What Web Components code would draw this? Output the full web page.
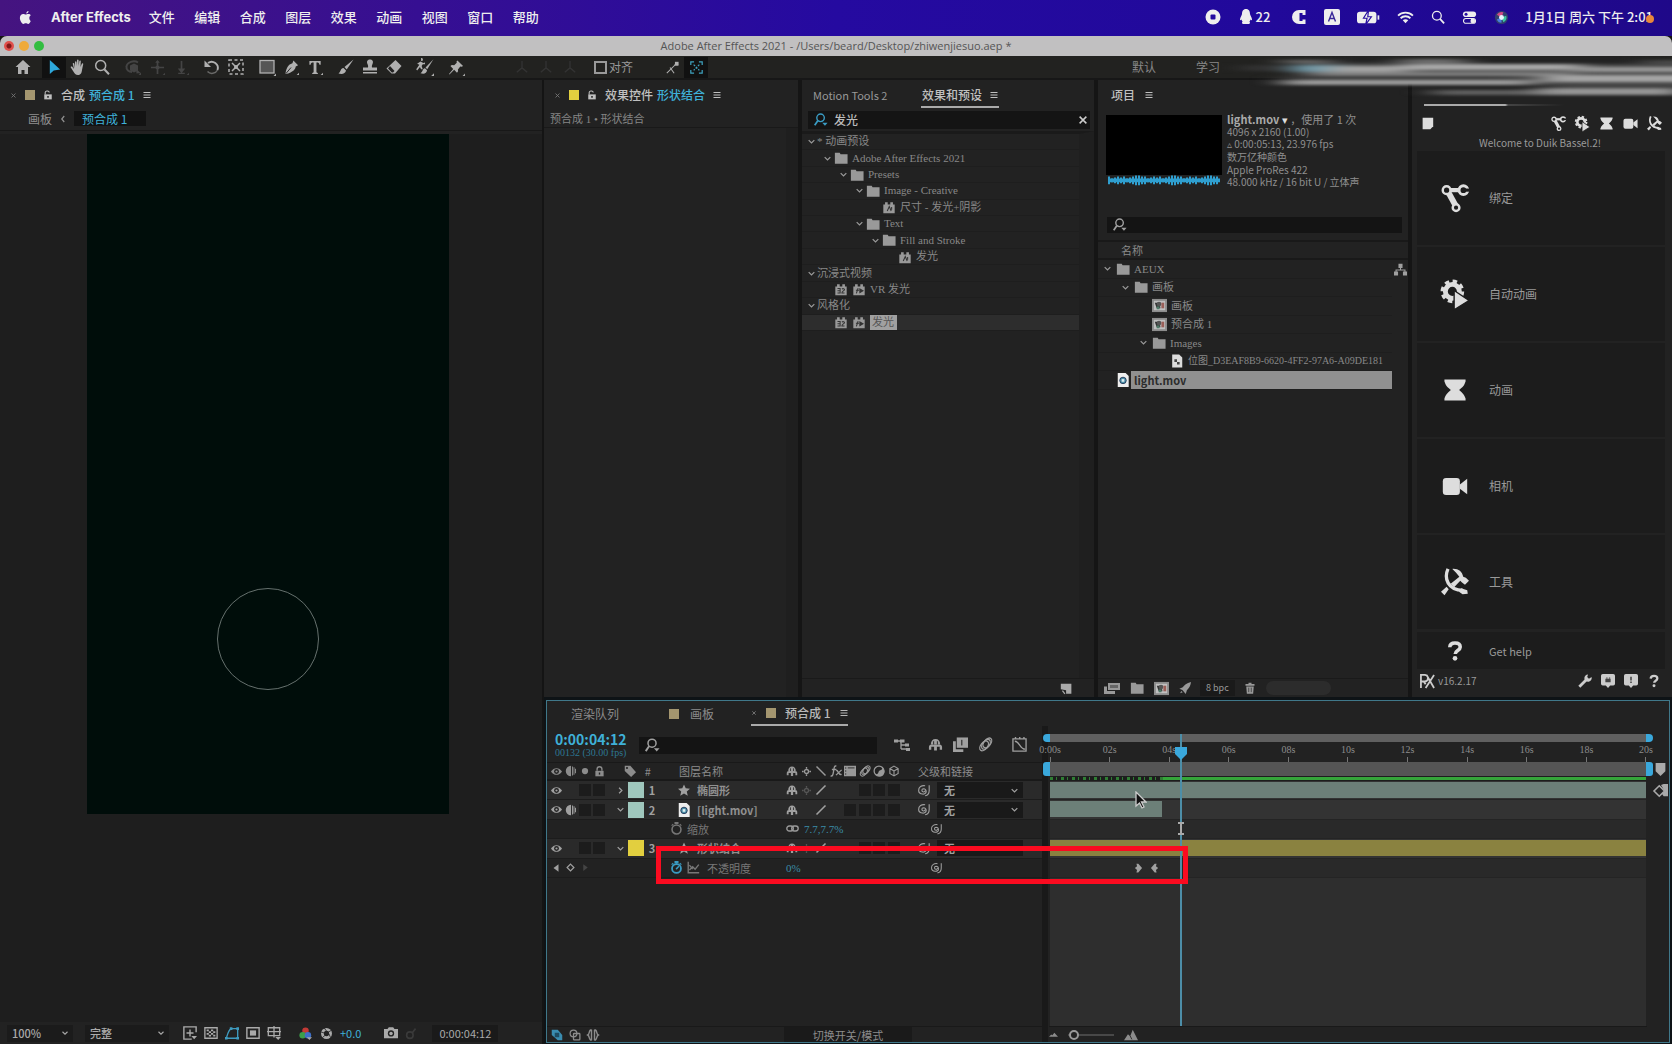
<!DOCTYPE html>
<html lang="zh-CN">
<head>
<meta charset="utf-8">
<title>After Effects</title>
<style>
html,body{margin:0;height:100%;background:#141414}
body{font:12px/16px "Noto Sans CJK SC",sans-serif;color:#a0a0a0;overflow:hidden;
--panel:#222;--line:#161616;--cyan:#3fb1d8;--serif:"Liberation Serif","Noto Sans CJK SC",serif}
</style>
</head>
<body>
<ae-app></ae-app>
<script>
const ICONS={
apple:'<path d="M11.2 1c.1 1.300-.9 2.700-2.400 2.800C8.600 2.500 9.800 1.200 11.200 1zM13.600 11.600c-.6 1.500-1.600 3.200-2.800 3.200-1 0-1.300-.6-2.500-.6s-1.600.6-2.500.6C4.300 14.800 2 11.500 2 8.500c0-2.800 1.800-4.300 3.500-4.300 1.100 0 2 .7 2.700.7s1.700-.8 3.100-.7c.9 0 1.800.5 2.400 1.300-2.300 1.400-1.900 4.700-.1 6.100z"/>',
rec:'<circle cx="8" cy="8" r="7.500"/><rect x="5.500" y="5.500" width="5" height="5" rx="1" fill="#240aa0"/>',
qq:'<path d="M8 0c3 0 4 2.500 4 5 0 1 2 3.500 2 5.500 0 1-.8.8-1.400 0-.3 1-.8 1.700-1.200 2.300.9.500.9 2-.4 2.200H5c-1.300-.2-1.300-1.700-.4-2.200-.4-.6-.9-1.300-1.200-2.300-.6.800-1.400 1-1.400 0 0-2 2-4.500 2-5.500 0-2.500 1-5 4-5z"/>',
cc:'<path d="M14.500 1H8a7 7 0 0 0 0 14h6.500v-4.500h-3V12H8.500V4h3v2h3z"/><path d="M9.500 4h1.500v8H9.500z" fill="#240aa0"/>',
aa:'<rect x="0" y="0" width="16" height="16" rx="2"/><path d="M4.500 12.500 8 3.500l3.500 9M5.800 9.500h4.400" fill="none" stroke="#3a2a9a" stroke-width="1.400"/>',
batt:'<rect x="0" y="4" width="13.500" height="8" rx="2"/><path d="M14.300 6.500h1.200v3h-1.200z"/><path d="M8 3 4.500 8.500H7L6 13l4-5.500H7.500z" stroke="#240aa0" stroke-width=".8"/>',
wifi:'<path d="M1 6.200a10 10 0 0 1 14 0M3.400 8.700a6.600 6.600 0 0 1 9.200 0" fill="none" stroke="currentColor" stroke-width="1.700"/><path d="M5.400 10.700a3.600 3.600 0 0 1 5.200 0L8 13.500z"/>',
mag:'<circle cx="6.700" cy="6.500" r="5" fill="none" stroke="currentColor" stroke-width="1.500"/><path d="m10.300 10.200 4.700 5" stroke="currentColor" stroke-width="2"/>',
ctl:'<rect x="1" y="1.500" width="14" height="6" rx="3"/><circle cx="4.300" cy="4.500" r="1.600" fill="#240aa0"/><rect x="1.600" y="9.100" width="12.800" height="5" rx="2.500" fill="none" stroke="currentColor" stroke-width="1.200"/><circle cx="11.500" cy="11.600" r="2.500"/>',
siri:'<circle cx="8" cy="8" r="7" fill="#31406e"/><path d="M3 5a6 6 0 0 1 7-2.500L8 8z" fill="#d24a86"/><path d="M13 6a6 6 0 0 1-3 7L8 8z" fill="#3cc7a2"/><path d="M3 10a6 6 0 0 0 5 3.600L8 8z" fill="#4a7ce0"/><circle cx="8" cy="8" r="2.600" fill="#e8f4ff"/>',
home:'<path d="M8 1 .5 8H3v7h3.500v-4h3v4H13V8h2.500z"/>',
sel:'<path d="M3 0v15l4.200-3.700L14 10z"/>',
hand:'<path d="M5 9V3.200c0-1.200 1.500-1.200 1.600 0L7 7V1.300c0-1.200 1.600-1.200 1.600 0V7l.7-4.800c.2-1.100 1.600-.9 1.500.3L10.500 8l1.300-3.300c.4-1 1.700-.6 1.400.5L12 11c-.3 2.500-1 5-4 5-2.500 0-3.500-1.500-4.300-3L.8 8.500C.3 7.500 1.500 7 2.300 7.800L4 10 2.800 5c-.2-1.100 1.100-1.300 1.500-.4z"/>',
orbit:'<path d="M13 3.500C9 1 2 3 1.500 7.500 1 11 4 13 7 13" fill="none" stroke="currentColor" stroke-width="2"/><path d="M5 6.500 9 4.500l4 2v5l-4 2-4-2z"/><path d="m11 9.500 4.500 4.500-4 .5zM16 16h-2.500L16 13.500z"/>',
pan:'<path d="M8 1v14M1 8h14" stroke="currentColor" stroke-width="1.800"/><path d="m8 0 2.500 3h-5z"/><circle cx="8" cy="8" r="2.200"/><path d="M16 16h-2.500L16 13.500z"/>',
dolly:'<path d="M8 1v10" stroke="currentColor" stroke-width="1.800"/><path d="m8 14-4-5h8zM4.500 13.500h7V15h-7zM16 16h-2.500L16 13.500z"/>',
rot:'<path d="M4 4a6.200 6.200 0 0 1 9.500 7" fill="none" stroke="currentColor" stroke-width="1.900"/><path d="M13.500 11A6.200 6.200 0 0 1 3.500 12.500" fill="none" stroke="currentColor" stroke-width="1.500" opacity=".5"/><path d="M.5 1.500v6.500H7z"/>',
anchor:'<path d="M1 1h14v14H1z" fill="none" stroke="currentColor" stroke-width="1.500" stroke-dasharray="3 2.500"/><path d="m4 4 8 8m0-8-8 8" stroke="currentColor" stroke-width="1.500"/><circle cx="8" cy="8" r="2"/>',
rect:'<rect x="1" y="1.500" width="14" height="12.500" fill="#555" stroke="currentColor" stroke-width="1.300"/><path d="M17 17h-2.500L17 14.500z"/>',
pen:'<path d="M10 .5 15 5.500 12.500 7c-.5 3-2 5-8 7.500L1.500 15 2 12C3.500 6.500 5.500 4.500 9 3.500z"/><path d="M2 14.500 7.500 8" stroke="#222" stroke-width="1"/><path d="M16 16h-2.500L16 13.500z"/>',
type:'<path d="M1.500 1h12v4h-1.300C12 3.200 11.500 2.600 9 2.600v10c0 .8.500 1 1.500 1.200V15h-6v-1.200c1-.2 1.500-.4 1.500-1.200v-10c-2.500 0-3 .6-3.200 2.400H1.500z"/><path d="M16 16h-2.500L16 13.500z"/>',
brush:'<path d="M15.500.500 6.500 8l2.200 2.500z"/><path d="M5.500 9c-3-.2-2.500 4-5 5.500 3.500 1 7 .3 7.500-3z"/>',
stamp:'<path d="M8 .5c3 0 3.500 2.500 2.500 4.500-.6 1.300-.8 2.500-.5 3.500h5v3H1v-3h5c.3-1 .1-2.200-.5-3.500-1-2-.5-4.500 2.500-4.500zM1 13h14v1.500H1z"/>',
eraser:'<path d="M9.500 1 15.500 7 9 14.500H5.500L.5 9.500z"/><path d="m4 7 4.500 5-1.500 1.500H5.800L2 9.500z" fill="#222"/>',
roto:'<path d="M15.500 1 8.500 8.500 10 10z"/><path d="M8 9c-2.500.3-1.500 3-4 4.500 3 1 5.500.3 5.800-2.600zM4.500 2.500A1.300 1.300 0 1 0 4.500 0zM1 5l3-2 2.500 1.500L8 4v1.500H6L5 7l1 3H4.500L3.500 8 1 11l-.8-1L3 6z"/><path d="M16 16h-2.500L16 13.500z"/>',
pin:'<path d="m9 .5 6 6-1.500.8L12 7 9.500 10l.2 2L8.500 13.500 5.500 10.500.5 15.500 0 15l4.500-5.500-3-3L3 5.300l2.500.2L8.300 3 8 1.500zM17 17h-2.500L17 14.500z"/>',
axes:'<path d="M8 1v8M8 9l-6 5M8 9l6 5" fill="none" stroke="currentColor" stroke-width="1.500"/>',
snap1:'<path d="M1 15 12 4M5 8l5 7M10 5l5 0" fill="none" stroke="currentColor" stroke-width="1.300"/><path d="M11 1h4.500v4.500H11z"/>',
snap2:'<path d="M1 5V1h4M11 1h4v4M15 11v4h-4M5 15H1v-4" fill="none" stroke="currentColor" stroke-width="1.500"/><path d="m4.500 4.500 7 7m0-7-7 7" stroke="currentColor" stroke-width="1.500" stroke-dasharray="2.500 1.500"/>',
x:'<path d="m3.500 3.500 9 9m0-9-9 9" stroke="currentColor" stroke-width="2"/>',
lock:'<path d="M2 7h12v8H2z"/><path d="M3.500 7V4.500A2.800 2.800 0 0 1 6.300 1.500h.9A2.800 2.800 0 0 1 10 4" fill="none" stroke="currentColor" stroke-width="1.700"/><path d="M6.800 9.500h2.400v3H6.800z" fill="#222"/>',
lockc:'<path d="M2 7h12v8H2z"/><path d="M4.500 7V4.500a3.500 3.500 0 0 1 7 0V7" fill="none" stroke="currentColor" stroke-width="2"/><path d="M7 9.500h2v3H7z" fill="#222"/>',
menu:'<path d="M1 3h14M1 8h14M1 13h14" stroke="currentColor" stroke-width="2"/>',
down:'<path d="m3 5.500 5 5 5-5" fill="none" stroke="currentColor" stroke-width="2.200"/>',
right:'<path d="m5.500 3 5 5-5 5" fill="none" stroke="currentColor" stroke-width="2.200"/>',
left:'<path d="m10.500 2-5 6 5 6" fill="none" stroke="currentColor" stroke-width="2.400"/>',
search:'<circle cx="7.500" cy="5.500" r="4.300" fill="none" stroke="currentColor" stroke-width="1.600"/><path d="M4.300 8.800.8 14" stroke="currentColor" stroke-width="2"/><path d="M9.500 11h6l-3 3.500z"/>',
folder:'<path d="M1 2h5.500l1 1.700H15.500V14.500H1z"/>',
preset:'<path d="M1.500 5h2V2.500h3V5h3V2.500h3V5h2v10h-13z"/><path d="m6 12.500 2.300-5 2.200 5M11 8v3" stroke="#333" stroke-width="1.200" fill="none"/>',
fx32:'<path d="M1.500 5h2V2.500h3V5h3V2.500h3V5h2v10h-13z"/><path d="M4 7.500h3v5H4m0-2.500h3M12 12.500H9c0-2 3-2.500 3-4 0-1-2-1.200-3-.5" stroke="#333" stroke-width="1.200" fill="none"/>',
fxp:'<path d="M1.500 5h2V2.500h3V5h3V2.500h3V5h2v10h-13z"/><path d="m5 13 2-6M4.500 9.500H8M9 8l3.500 2L9 12z" stroke="#333" stroke-width="1.200" fill="#333"/>',
comp:'<path d="M0 1h16v14H0z" fill="#8d8d8d"/><path d="M2 3h12v10H2z" fill="#c0c0c0"/><path d="M3 5h5l1 6H5z" fill="#333"/><circle cx="7.500" cy="6.500" r="2.500" fill="#555"/><path d="M10 5h3v6h-3z" fill="#9b5f58"/><path d="M5 9h3v3H5z" fill="#4f7a68"/>',
file:'<path d="M2.500.500h8l3.500 3.500v11.500H2.500z" fill="#dcdcdc"/><path d="M5 6h3v3h3v3H8V9H5z" fill="#444"/>',
mov:'<path d="M2 0h9l3.500 3.500V16H2z" fill="#eee"/><circle cx="8" cy="8.500" r="3.700" fill="#4a90a8" stroke="#235" stroke-width="1"/><path d="M6.500 7h3v3h-3z" fill="#dfeef2"/>',
tree:'<path d="M5.500 1h5v5h-5zM0 10.500h5v5H0zM11 10.500h5v5h-5z"/><path d="M8 6v3M2.500 11V8.700h11V11" fill="none" stroke="currentColor" stroke-width="1.300"/>',
note:'<path d="M2 1h13v10.500L11.500 15H2z"/>',
newc:'<path d="M1 2h13v12.500H7.500V10L1 9z"/><path d="m3 10.500 3 4" stroke="currentColor" stroke-width="1.500"/>',
interp:'<path d="M4 3h12v7H4z"/><path d="M0 6.500h3V11h8v3H0z"/><path d="M6 5h8v3H6z" fill="#666"/>',
rocket:'<path d="M16 0C10 1.500 7 4 5 7L.5 9l4 1.500 2.500 3L9 16l1.500-5C13.500 8 15.500 5 16 0zM3 12l-1.500 3L5 13.500z"/>',
trash:'<path d="M2 2.500h4V1h4v1.500h4V5H2zM3 6h10l-.8 9.500H3.800z"/><path d="M6.300 7.500v6M9.700 7.500v6" stroke="#333"/>',
bones:'<path d="M3.500 3.500 9 13.500" stroke="currentColor" stroke-width="3.400"/><path d="M4.500 3.500h7" stroke="currentColor" stroke-width="2.400"/><circle cx="3.200" cy="3.500" r="2.200" fill="#1c1c1c" stroke="currentColor" stroke-width="1.400"/><circle cx="8.600" cy="13.500" r="1.900" fill="#1c1c1c" stroke="currentColor" stroke-width="1.400"/><circle cx="12.800" cy="3.500" r="2.500" fill="#1c1c1c" stroke="currentColor" stroke-width="1.700"/><path d="M13 2.600h3.500v1.800H13z" fill="#1c1c1c"/>',
gearp:'<circle cx="6.500" cy="6.500" r="4" fill="none" stroke="currentColor" stroke-width="2.800"/><circle cx="6.500" cy="6.500" r="5.800" fill="none" stroke="currentColor" stroke-width="1.900" stroke-dasharray="2.550 2"/><path d="M7.500 6v11l8.500-5.300z" stroke="#1c1c1c" stroke-width=".8"/>',
hour:'<path d="M1.500 1.500h13v1.200c-1 3.300-3 4.300-4 5.300 1 1 3 2 4 5.300v1.200h-13v-1.200c1-3.300 3-4.300 4-5.300-1-1-3-2-4-5.300z"/>',
cam:'<rect x=".5" y="3" width="10.500" height="10.500" rx="2"/><path d="m11 7 4.500-3.500v9.500L11 9.700z"/>',
tools:'<path d="M4 .5C1.500 6 4 12.500 12.500 12.800" fill="none" stroke="currentColor" stroke-width="1.900"/><path d="m11.500 11.500 3.500 1.200.3 2-3 .3-2-1.500zM0 13.500 3.200 10.700 4.400 12.200 2 15.500zM5.500 9 10.500 5 8.500 2.500 6.500.5C10 .3 12 2 12.700 5l1.500.5 1.800 1.800-2.300 2.200L12 8.300l-1-1L7.500 11z"/>',
q:'<path d="M4.200 5.300C4.300 2.800 6 2.200 8 2.200c2.400 0 3.800 1.100 3.800 2.900 0 2.600-3.600 2.500-3.600 5" fill="none" stroke="currentColor" stroke-width="2.600"/><circle cx="8" cy="13.300" r="1.700"/>',
wrench:'<path d="m1.500 14.500 8-8" stroke="currentColor" stroke-width="3.200"/><path d="M15.500 3.500a4.200 4.200 0 1 1-4-3L10.500 3.500 12.500 5.500z"/>',
chat:'<path d="M2 0h12a2 2 0 0 1 2 2v9a2 2 0 0 1-2 2h-3.500L8 16l-2.500-3H2a2 2 0 0 1-2-2V2a2 2 0 0 1 2-2z"/><path d="M5 5.500h6v4H5zM6 4h1.500v1H6zm3 0h1.500v1H9z" fill="#444"/>',
alert:'<path d="M2 0h12a2 2 0 0 1 2 2v9a2 2 0 0 1-2 2h-3.500L8 16l-2.500-3H2a2 2 0 0 1-2-2V2a2 2 0 0 1 2-2z"/><path d="M7.100 3h1.800v4.300H7.100zM7.100 8.500h1.800v1.800H7.100z" fill="#444"/>',
px:'<path d="M1 15V1h4a3 3 0 0 1 0 7H1M7 1l8 14M15 1 6 15M4 8l2 3" fill="none" stroke="currentColor" stroke-width="1.900"/>',
mini:'<path d="M0 4h9M7 4v8M7 8h6M7 12h8" fill="none" stroke="currentColor" stroke-width="1.300"/><path d="M0 2.500h4v3H0zM6 2.500h4.500v3H6zM11 6.500h4v3h-4zM12 11h4v3h-4z"/>',
shy:'<path d="M3 8C3 4 5 2 8 2s5 2 5 6z"/><path d="M1 13.500V11c0-2 1-3 3-3h8c2 0 3 1 3 3v2.500h-2.500V10.500H9.500v4h-3v-4h-3v3z"/><path d="M6 4.500v3.500M10 4.500v3.500" stroke="#222" stroke-width="1"/>',
blend:'<path d="M4 .5h12v11H4z"/><path d="M0 4.500h3V13h8v3H0z"/><path d="M8.500 3h1.600v6H8.500z" fill="#444"/>',
mblur:'<g fill="none" stroke="currentColor" stroke-width="1.400"><ellipse cx="6.500" cy="9.500" rx="3.500" ry="6" transform="rotate(38 6.500 9.500)"/><ellipse cx="8.500" cy="7.800" rx="3.500" ry="6" transform="rotate(38 8.500 7.800)"/><ellipse cx="10" cy="6.300" rx="3.500" ry="6" transform="rotate(38 10 6.300)"/></g>',
graph:'<path d="M1 2h14v13H1zM3 4.500c5 0 5.500 8.500 11 8.500" fill="none" stroke="currentColor" stroke-width="1.400"/><path d="M3 0h1.500v2H3zM7.500 0H9v2H7.500zM12 0h1.500v2H12z"/>',
eye:'<path d="M0 8c4-6.500 12-6.500 16 0-4 6.500-12 6.500-16 0z"/><circle cx="8" cy="8" r="3.600" fill="#222"/><circle cx="8" cy="8" r="1.600"/>',
spk:'<path d="M8 1v14A7 7 0 0 1 8 1z"/><path d="M10 2v12M12 3v10M14 5v6" stroke="currentColor" stroke-width="1.300"/>',
dot:'<circle cx="8" cy="8" r="5"/>',
tag:'<path d="M1 1h7.500L16 9.500 9.500 16 1 8z"/><circle cx="4" cy="4" r="1.400" fill="#222"/>',
sun:'<circle cx="8" cy="8" r="3.600" fill="none" stroke="currentColor" stroke-width="2.400"/><path d="M8 0v3M8 13v3M0 8h3M13 8h3" stroke="currentColor" stroke-width="2.400"/>',
back:'<path d="m2 2 12 12" stroke="currentColor" stroke-width="1.900"/>',
slash:'<path d="M2 14 14 2" stroke="currentColor" stroke-width="2.200"/>',
fx:'<path d="M8.500 1.500C5.500.500 5.500 4 4.800 8S4 15.500.8 14.500M2.500 6h6M8 7c3-1 3 7 7.500 5.500M15.500 6.500 8 13.500" fill="none" stroke="currentColor" stroke-width="1.800"/>',
film:'<path d="M0 1h16v14H0z"/><path d="M1.500 3H3v2H1.500zM1.500 7H3v2H1.500zM1.500 11H3v2H1.500zM5 3h9v1.500H5z" fill="#444"/>',
half:'<circle cx="8" cy="8" r="6.500" fill="none" stroke="currentColor" stroke-width="1.700"/><path d="M12.500 3.500A6.500 6.500 0 1 1 3.500 12.500c4 0 3.500-3 4.500-4.500s4.500-1 4.500-4.500z"/>',
cube:'<path d="M8 1.500 13.500 4.700v6.600L8 14.500l-5.500-3.200V4.700zM8 8l5-3M8 8 3 5M8 8v6" fill="none" stroke="currentColor" stroke-width="1.500"/>',
star:'<path d="m8 .5 2.300 5.200 5.700.6-4.300 3.800 1.300 5.600L8 12.800l-5 2.900 1.300-5.600L0 6.300l5.700-.6z"/>',
spiral:'<path d="M10 8a2 2 0 1 1-2-2.200A3.500 3.500 0 0 1 11.300 9.200c0 4.300-8.800 4.500-9.300-1C1.700 3.500 6 1.500 10 2.200M15 1.500V8c0 4-2 6-5 6.500" fill="none" stroke="currentColor" stroke-width="1.400"/>',
watch:'<circle cx="8" cy="9.200" r="5.500" fill="none" stroke="currentColor" stroke-width="1.900"/><path d="M5.500 0h5v2.500h-5zM12.500 2l2 2-1 1-2-2zM3.500 2l-2 2 1 1 2-2z"/>',
watchon:'<circle cx="8" cy="9.200" r="5.500" fill="none" stroke="currentColor" stroke-width="2.200"/><path d="M5.500 0h5v2.500h-5zM12.500 2l2 2-1 1-2-2zM3.500 2l-2 2 1 1 2-2z"/><path d="m7.500 10 3.500-3.500" stroke="currentColor" stroke-width="1.800"/>',
chain:'<rect x="1" y="5" width="8" height="6" rx="3" fill="none" stroke="currentColor" stroke-width="1.700"/><rect x="7" y="5" width="8" height="6" rx="3" fill="none" stroke="currentColor" stroke-width="1.700"/>',
graph2:'<path d="M1.500 1v13.500H15M3 11l4-4 3 3 4.500-5.500M3 5l4 5" fill="none" stroke="currentColor" stroke-width="1.700"/>',
tl:'<path d="M12 2v12L4 8z"/>',tr:'<path d="M4 2v12l8-6z"/>',
kf:'<path d="m8 2 6 6-6 6-6-6z" fill="none" stroke="currentColor" stroke-width="2.200"/>',
kin:'<path d="M5.500 1h3L14.500 8l-6 7h-3L6.500 11 3 8l3.500-3z"/>',
kout:'<path d="M10.500 1h-3L1.500 8l6 7h3L9.500 11 13 8 9.500 5z"/>',
addf:'<path d="M15 7V1H1v14h9" fill="none" stroke="currentColor" stroke-width="1.600"/><path d="M7.200 4h1.600v3.200H12v1.600H8.800V12H7.200V8.800H4V7.200h3.200z"/><path d="M9.500 11.500H16l-3.200 3.500z"/>',
chk:'<path d="M1 2h14v12H1z" fill="none" stroke="currentColor" stroke-width="1.500"/><path d="M3 4h2.500v2H3zM8 4h2.500v2H8zM5.500 6H8v2H5.500zM10.500 6H13v2h-2.500zM3 8h2.500v2H3zM8 8h2.500v2H8zM5.500 10H8v2H5.500zM10.500 10H13v2h-2.500z"/>',
mask:'<path d="M1.500 14C3 9 4 4.500 7 3h7.500v11z" fill="none" stroke="currentColor" stroke-width="1.500"/><path d="M0 12.500h3v3H0zM5.500 1.500h3v3h-3zM13 1.500h3v3h-3zM13 12.500h3v3h-3z"/>',
roi:'<path d="M1 2h14v12H1z" fill="none" stroke="currentColor" stroke-width="1.600"/><path d="M4.500 5h7v6h-7z"/>',
grid:'<path d="M1.500 2h13v9h-13zM8 0v13M0 6.500h16" fill="none" stroke="currentColor" stroke-width="1.500"/><path d="M9.500 12.500H16l-3.200 3.500z"/>',
rgb:'<circle cx="8" cy="4.500" r="4" fill="#c33a36"/><circle cx="4.500" cy="10" r="4" fill="#3b9f49"/><circle cx="11" cy="10" r="4" fill="#3f6fc6"/><path d="M9.500 12.500H16l-3.200 3.500z"/>',
aperture:'<circle cx="8" cy="8" r="5" fill="none" stroke="currentColor" stroke-width="3.500"/><path d="m5 1 3 4M14 4l-4 2.500M13 13l-2-4.500M3 13l3.500-3M1 6l4.500 1.500" stroke="#222" stroke-width="1"/>',
photo:'<path d="M0 3.500h4L5.500 1.500h5L12 3.500h4V14H0z"/><circle cx="8" cy="8.500" r="3.600" fill="#222"/><circle cx="8" cy="8.500" r="2"/>',
ghost:'<circle cx="6" cy="10" r="4" fill="none" stroke="currentColor" stroke-width="2"/><path d="m9 7 4-5" stroke="currentColor" stroke-width="2"/>',
foot1:'<path d="M1 1h8l6 7v7H9L1 8z"/><path d="M5 5h6v6H5z" fill="#1d4c63"/>',
foot2:'<circle cx="6" cy="6" r="4.500" fill="none" stroke="currentColor" stroke-width="1.700"/><rect x="6" y="6" width="8.500" height="8.500" rx="1" fill="none" stroke="currentColor" stroke-width="1.700"/>',
foot3:'<path d="M6 1C2 1 4 6.500 1 8c3 1.500 1 7 5 7M10 1c4 0 2 5.500 5 7-3 1.500-1 7-5 7M6 1v14M10 1v14" fill="none" stroke="currentColor" stroke-width="1.900"/>',
mts:'<path d="m0 12 4-4 2 1.500L9.500 5 16 12z"/>',
mtl:'<path d="m0 14 4.500-7L7 9.500 10 2l6 12z"/><path d="m7 9 2 4" stroke="#222"/>',
shield:'<path d="M2 0h12v10l-6 6-6-6z"/>',
layersr:'<path d="m6 2 6 6-6 6-6-6z" fill="none" stroke="currentColor" stroke-width="1.800"/><path d="m8 1 3-1h5v14h-5l-2-3 3-3z"/>'
};
const define=(name,css,html)=>customElements.define(name,class extends HTMLElement{
connectedCallback(){
if(this.shadowRoot)return;
this.attachShadow({mode:'open'}).innerHTML=`<style>*{box-sizing:border-box}button{all:unset;box-sizing:border-box;display:inline-flex;align-items:center;white-space:nowrap}${css}</style>`+(typeof html==='function'?html(this):html);
}});
const i=(n,s=14,c='')=>`<ae-icon name="${n}" style="--s:${s}px${c?';color:'+c:''}"></ae-icon>`;
define('ae-icon',':host{display:inline-flex;flex:none;width:var(--s,14px);height:var(--s,14px)}svg{width:100%;height:100%;overflow:visible}',
h=>`<svg viewBox="0 0 16 16" fill="currentColor" aria-hidden="true">${ICONS[h.getAttribute('name')]}</svg>`);

define('ae-app',`
:host{display:grid;grid-template-rows:36px 20px 24px minmax(0,1fr);height:100vh;position:relative}
main{display:grid;grid-template-columns:542fr 1128fr;gap:2px;min-height:0}
.right{display:grid;grid-template-rows:minmax(0,1fr) 343px;gap:3px;min-height:0;padding-bottom:1px;background:#0e1316}
.top{display:grid;grid-template-columns:254fr 292fr 310fr 260fr;gap:4px;min-height:0;background:#151515}
`,`<mac-menubar></mac-menubar><ae-titlebar></ae-titlebar><ae-toolbar></ae-toolbar>
<main><ae-viewer></ae-viewer><div class="right"><div class="top"><ae-effect-controls></ae-effect-controls><ae-effects-browser></ae-effects-browser><ae-project></ae-project><duik-panel></duik-panel></div><ae-timeline></ae-timeline></div></main>`);

define('mac-menubar',`
:host{display:flex;align-items:center;justify-content:space-between;background:linear-gradient(90deg,#451480,#360f92 25%,#250aa0 50%,#21099b 75%,#1f0889);color:#eee;font-size:13px;font-weight:500;padding:0 19px 2px 18px}
nav,.st{display:flex;align-items:center}
nav{gap:18px}.app{font:700 13px/16px Inter,sans-serif}
.m{display:flex;justify-content:space-between;width:390px}
.st{gap:17px}.qq{display:flex;align-items:center;gap:1px;margin-right:4px}.t{display:flex;position:relative;margin-left:-1px}
.t i{position:absolute;right:-1px;top:6px;width:8px;height:8px;border-radius:50%;background:#e8873a}
`,`<nav>${i('apple',15)}<button class="app">After Effects</button><div class="m">${'文件 编辑 合成 图层 效果 动画 视图 窗口 帮助'.split(' ').map(t=>`<button>${t}</button>`).join('')}</div></nav>
<div class="st">${i('rec',16)}<span class="qq">${i('qq',16)}22</span>${i('cc',16)}${i('aa',16)}${i('batt',23)}${i('wifi',17)}${i('mag',14)}${i('ctl',15)}${i('siri',15)}<span class="t">1月1日 周六 下午 2:01<i></i></span></div>`);

define('ae-titlebar',`
:host{display:flex;align-items:center;background:#c1c0c1;border-radius:7px 7px 0 0;padding:0 4px;color:#555;font:11px/16px "Open Sans",sans-serif}
.l{display:flex;gap:5px;flex:1}.l i{width:10px;height:10px;border-radius:50%}.r{flex:1}
`,`<span class="l"><i style="background:radial-gradient(circle,#801818 2px,#e0504c 3px)"></i><i style="background:#efaa3a"></i><i style="background:#32bd40"></i></span><span>Adobe After Effects 2021 - /Users/beard/Desktop/zhiwenjiesuo.aep *</span><span class="r"></span>`);

define('ae-toolbar',`
:host{display:flex;align-items:center;background:#222220;border-bottom:2px solid #171717;color:#b0b0b0;padding-left:11px;position:relative}
.g{display:flex}button{width:24px;height:21px;justify-content:center}
.dim{color:#444}.on{background:#111}.home{margin-right:7px}.g+.g{margin-left:7px}
label{display:flex;align-items:center;gap:2px;margin-left:12px;color:#999;width:66px}
input{appearance:none;width:13px;height:13px;border:2px solid #999;margin:0}
.ws{display:flex;gap:40px;margin-left:424px;color:#888}.ws button{width:auto}
svg.smear{position:absolute;right:0;top:0;width:450px;height:46px;z-index:3;overflow:hidden}
`,`<button class="home">${i('home',16)}</button>
<div class="g"><button class="on">${i('sel',15,'#2ea8dc')}</button><button>${i('hand',16)}</button><button>${i('mag',16)}</button></div>
<div class="g dim"><button>${i('orbit',16)}</button><button>${i('pan',15)}</button><button>${i('dolly',15)}</button></div>
<div class="g"><button>${i('rot',16)}</button><button>${i('anchor',16)}</button></div>
<div class="g"><button>${i('rect',16)}</button><button>${i('pen',15)}</button><button>${i('type',15)}</button></div>
<div class="g"><button>${i('brush',16)}</button><button>${i('stamp',16)}</button><button>${i('eraser',16)}</button></div>
<div class="g"><button>${i('roto',18)}</button></div><div class="g"><button>${i('pin',15)}</button></div>
<div class="g dim" style="margin-left:42px">${`<button>${i('axes',14,'#333')}</button>`.repeat(3)}</div>
<label><input type="checkbox">对齐</label><button>${i('snap1',13)}</button><button class="on">${i('snap2',13,'#3fa3c0')}</button>
<div class="ws"><button>默认</button><button>学习</button></div>
<svg class="smear" viewBox="0 0 450 46" aria-hidden="true"><defs><filter id="b" x="-20%" y="-50%" width="140%" height="200%" color-interpolation-filters="sRGB"><feGaussianBlur stdDeviation="14 1.500"/></filter></defs>
<g filter="url(#b)"><path fill="#484848" d="M75 4h420v27H330v-2H75z"/><path fill="#333" d="M20 9h60v6H20z"/><path fill="#707070" d="M60 4h50v3H60zM180 3h60v4h-60z"/><path fill="#222" d="M110 0h60v7h-60zM250 0h170v8H250z"/><path fill="#6f97a6" d="M70 9h50v7H70z"/><path fill="#a2a2a2" d="M105 10h80v6h-80z"/><path fill="#a8a8a8" d="M180 8h180v6H180z"/><path fill="#808080" d="M90 16h110v4H90zM200 16h150v4H200z"/><path fill="#959595" d="M350 11h150v5H350z"/><path fill="#383838" d="M60 20h230v3H60z"/><path fill="#9c9c9c" d="M60 24h250v5H60z"/><path fill="#a4a4a4" d="M320 19h180v7H320z"/><path fill="#606060" d="M210 34h120v5H210z"/><path fill="#949494" d="M315 32h145v7H315z"/></g></svg>`);

define('ae-tabbar',`:host{display:flex;align-items:center;height:30px;flex:none;color:#999}::slotted(*){flex:none}`,'<slot></slot>');
define('ae-swatch',':host{display:inline-block;flex:none;width:10px;height:10px;background:var(--c)}','');

const tabcss='.tab{display:flex;align-items:center;color:#c0c0c0;font-weight:500;gap:8px;padding-left:10px}.n{display:flex;gap:4px}.cy{color:var(--cyan)}';
define('ae-viewer',`${tabcss}
:host{display:flex;flex-direction:column;background:var(--panel);min-height:0;color:#909090}
.bc{display:flex;align-items:center;height:21px;padding:0 0 3px 28px;border-bottom:1px solid #181818;margin-bottom:3px;gap:7px}
.bc .cur{background:#131313;padding:0 19px 0 8px;height:15px;color:var(--cyan)}
.stage{flex:1;min-height:0;background:#1e1e1e;padding:0 93px 208px 87px;display:flex}
.canvas{flex:1;background:#000d0a;display:flex;align-items:flex-end;justify-content:center;padding-bottom:124px}
.canvas i{width:102px;height:102px;border:1px solid #65706d;border-radius:50%}
.foot{display:flex;align-items:center;height:22px;color:#aaa;font-size:11px;padding:0 0 0 7px}
select{all:unset;height:17px;background:#1b1b1b;padding-left:5px;box-sizing:border-box;font-weight:500}
.s{display:flex;align-items:center;background:#1b1b1b;height:17px;margin-right:12px;padding-right:4px}
.ic{display:flex;gap:7px;margin-left:2px;margin-right:18px}
.tc{background:#1a1a1a;padding:0 7px;margin-left:14px;height:17px}
`,`<ae-tabbar><div class="tab">${i('x',7,'#777')}<ae-swatch style="--c:#a4966f"></ae-swatch>${i('lock',10)}<span class="n"><span>合成</span><span class="cy">预合成 1</span></span>${i('menu',8)}</div></ae-tabbar>
<div class="bc"><button>画板</button>${i('left',8)}<button class="cur">预合成 1</button></div>
<div class="stage"><div class="canvas"><i></i></div></div>
<div class="foot"><span class="s"><select style="width:54px" aria-label="缩放"><option>100%</option></select>${i('down',8)}</span><span class="s"><select style="width:72px" aria-label="分辨率"><option>完整</option></select>${i('down',8)}</span>
<div class="ic">${i('addf')}${i('chk')}${i('mask',14,'#3f9cc0')}${i('roi')}${i('grid')}</div>${i('rgb',13)}<span style="width:8px"></span>${i('aperture',13)}<span style="width:7px"></span><button class="cy">+0.0</button><span style="width:23px"></span>${i('photo',14)}<span style="width:7px"></span>${i('ghost',13,'#3a3a3a')}<button class="tc">0:00:04:12</button></div>`);

define('ae-effect-controls',`${tabcss}
:host{display:flex;flex-direction:column;background:var(--panel);min-height:0}
.p{height:18px;padding-left:6px;border-bottom:1px solid #191919;font:11px/18px var(--serif);color:#858585}
.b{flex:1;border-right:12px solid #1f1f1f}
`,`<ae-tabbar><div class="tab">${i('x',7,'#777')}<ae-swatch style="--c:#e2cf3f"></ae-swatch>${i('lock',10)}<span class="n"><span>效果控件</span><span class="cy">形状结合</span></span>${i('menu',8)}</div></ae-tabbar><div class="p">预合成 1 • 形状结合</div><div class="b"></div>`);

const tree=(rows,step)=>rows.map(([lv,open,icons,text,cls=''])=>`<div class="row ${cls}" role="treeitem" style="padding-left:${lv*step}px"><span class="a">${open?i('down',9,'#999'):''}</span>${icons}<span class="tx">${text}</span></div>`).join('');
define('ae-effects-browser',`
:host{display:flex;flex-direction:column;background:var(--panel);min-height:0}
.t1{margin-left:11px;width:99px;font-size:11px}.t2{height:25px;gap:8px;font-weight:500;color:#c0c0c0;border-bottom:2px solid #aaa;padding:0 1px;margin-left:9px;margin-top:1px}
.se{display:flex;align-items:center;background:#141414;height:18px;margin:1px 4px 2px 6px;padding:0 1px 0 6px;gap:6px}
input{all:unset;flex:1;color:#bbb;font-weight:500;min-width:0}
.tree{display:grid;grid-auto-rows:1fr;height:200px;font:11px/15px var(--serif);color:#888;border-top:3px solid #1a1a1a;border-right:15px solid #1f1f1f}
.row{display:flex;align-items:center;gap:4px;border-bottom:1px solid #1e1e1e;white-space:nowrap;min-height:0}
.a{flex:none;width:10px;margin-left:5px;display:flex;margin-right:-3px}.row ae-icon{color:#999}
.top{gap:0}.top .a{margin-right:0}
.sel{background:#2d2d2d}.sel .tx{background:#a0a0a0;color:#555;padding:0 3px 0 2px}
.fill{flex:1;border-right:15px solid #1f1f1f}.foot{display:flex;height:19px;align-items:center;justify-content:flex-end;padding-right:21px;border-top:1px solid #1a1a1a;color:#aaa}
`,`<ae-tabbar><button class="t1">Motion Tools 2</button><button class="t2">效果和预设${i('menu',8)}</button></ae-tabbar>
<div class="se">${i('search',14,'#3a9cc4')}<input value="发光" aria-label="搜索效果">${i('x',12,'#ccc')}</div>
<div class="tree" role="tree">${tree([
[0,1,'','* 动画预设','top'],[1,1,i('folder'),'Adobe After Effects 2021'],[2,1,i('folder'),'Presets'],[3,1,i('folder'),'Image - Creative'],[4,0,i('preset'),'尺寸 - 发光+阴影'],[3,1,i('folder'),'Text'],[4,1,i('folder'),'Fill and Stroke'],[5,0,i('preset'),'发光'],[0,1,'','沉浸式视频','top'],[1,0,i('fx32')+i('fxp'),'VR 发光'],[0,1,'','风格化','top'],[1,0,i('fx32')+i('fxp'),'发光','sel']],16)}</div><div class="fill"></div><div class="foot">${i('newc',13)}</div>`);

define('ae-project',`
:host{display:flex;flex-direction:column;background:var(--panel);min-height:0;min-width:0}
.t{margin-left:13px;gap:10px;color:#c0c0c0;font-weight:500}
.info{display:flex;gap:5px;padding:3px 0 0 8px;height:107px}
.th{width:116px;height:73px;display:flex;flex-direction:column}.th b{height:62px;margin-top:2px;background:#000}
.th svg{height:11px;width:112px;margin-left:2px}
.meta{display:grid;grid-auto-rows:1fr;height:76px;font-size:10px;line-height:12px;white-space:nowrap;color:#8f8f8f}
.meta b{color:#aaa}.meta em{color:#ddd;font-style:normal}.meta span:first-child{font-size:11px}
.se{display:flex;align-items:center;background:#141414;height:16px;margin:0 6px 7px 9px;padding:0 6px;gap:4px}
input[type=search]{all:unset;flex:1;min-width:0}
.h{border-top:2px solid #191919;border-bottom:2px solid #191919;height:20px;padding-left:23px;line-height:17px;font-size:11px;color:#8a8a8a}
.w{display:flex}.w>ae-icon{margin:3px 1px 3px 2px}
.tree{flex:1;min-width:0;display:grid;grid-auto-rows:1fr;height:130px;font:11px/16px var(--serif);color:#888}
.row{display:flex;align-items:center;gap:4px;border-bottom:1px solid #1e1e1e;white-space:nowrap;min-width:0}
.a{flex:none;width:10px;margin-left:5px;display:flex;margin-right:-1px}.row ae-icon{color:#999}
.long{font-size:10px}
.sel{gap:1px}.sel .a{margin-right:2px}.sel .tx{background:#909090;color:#2c2c2c;flex:1;padding-left:3px;font:700 11px/18px "Noto Sans CJK SC",sans-serif}
.fill{flex:1}.foot{display:flex;height:19px;align-items:center;gap:10px;padding-left:6px;border-top:1px solid #1a1a1a;color:#999;font-size:9px}
.bpc{background:#1a1a1a;padding:0 6px;margin:0 -1px}.pill{width:65px;height:14px;border-radius:7px;background:#2c2c2c}
`,`<ae-tabbar><button class="t">项目${i('menu',8)}</button></ae-tabbar>
<div class="info"><div class="th"><b></b><svg viewBox="0 0 112 11" preserveAspectRatio="none" aria-hidden="true"><path d="M0 5.500h112" stroke="#2f9fd0" stroke-width="4"/><path d="${Array.from({length:37},(_,k)=>{const a=[4,2,3,4,3,4,2,3,4,5,5,4][k%12];return `M${k*3+1} ${5.5-a}v${a*2}`}).join('')}" stroke="#2f9fd0" stroke-width="2"/></svg></div>
<div class="meta"><span><b>light.mov</b> <em>▾</em> ，使用了 1 次</span><span>4096 x 2160 (1.00)</span><span>▵ 0:00:05:13, 23.976 fps</span><span>数万亿种颜色</span><span>Apple ProRes 422</span><span>48.000 kHz / 16 bit U / 立体声</span></div></div>
<div class="se">${i('search',14)}<input type="search" aria-label="搜索项目"></div><div class="h">名称</div>
<div class="w"><div class="tree" role="tree">${tree([[0,1,i('folder'),'AEUX'],[1,1,i('folder'),'画板'],[2,0,i('comp',15),'画板'],[2,0,i('comp',15),'预合成 1'],[2,1,i('folder'),'Images'],[3,0,i('file'),'位图_D3EAF8B9-6620-4FF2-97A6-A09DE181','long'],[0,0,i('mov'),'light.mov','sel']],18)}</div>${i('tree',13)}</div>
<div class="fill"></div><div class="foot">${i('interp',16)}${i('folder')}${i('comp',15)}${i('rocket',12)}<span class="bpc">8 bpc</span>${i('trash',12)}<span class="pill"></span></div>`);

define('duik-item',`
:host{display:flex;background:#1c1c1c;min-height:0;font-size:12px}
button{flex:1;padding-left:24px;gap:20px;color:#999}.i{width:28px;display:flex;justify-content:center;color:#ddd}
`,h=>`<button><span class="i">${i(h.getAttribute('icon'),h.getAttribute('size')||28)}</span><slot></slot></button>`);
define('duik-panel',`
:host{display:flex;flex-direction:column;background:var(--panel);color:#9a9a9a;font-size:10px;min-height:0;padding-right:7px}
.u{height:26px;display:flex;align-items:flex-end;padding-left:12px}.u i{width:140px;height:2px;background:linear-gradient(90deg,#aaa 58%,#444 60%,transparent)}
.ic{display:flex;gap:9px;align-items:center;height:30px;padding:4px 3px 0 9px;color:#ddd}.sp{flex:1}
.wel{text-align:center;height:15px;line-height:14px;padding-left:3px}
.items{display:grid;grid-auto-rows:1fr;gap:2px;height:478px;padding-left:5px}
.help{height:37px;margin:3px 0 0 5px;font-size:11px}
.foot{display:flex;align-items:center;height:24px;gap:9px;padding:0 4px 0 8px;color:#ccc}.v{color:#999;margin-left:-6px}
`,`<div class="u"><i></i></div><div class="ic">${i('note',13)}<span class="sp"></span>${i('bones',15)}${i('gearp',15)}${i('hour',15)}${i('cam',15)}${i('tools',15)}</div><div class="wel">Welcome to Duik Bassel.2!</div>
<div class="items"><duik-item icon="bones">绑定</duik-item><duik-item icon="gearp">自动动画</duik-item><duik-item icon="hour" size="26">动画</duik-item><duik-item icon="cam" size="26">相机</duik-item><duik-item icon="tools">工具</duik-item></div><duik-item class="help" icon="q" size="22">Get help</duik-item>
<div class="foot">${i('px',15)}<span class="v">v16.2.17</span><span class="sp"></span>${i('wrench')}${i('chat')}${i('alert')}${i('q')}</div>`);

const sw=a=>`<span class="sw">${a.map(n=>`<span>${n==='#'?'<i class="cell"></i>':n?i(n,n==='sun'?9:12,n==='sun'?'#555':''):''}</span>`).join('')}</span>`;
const layer=(n,col,open,spk,type,name,s)=>`<div class="row layer"><span class="av"><span>${i('eye',11)}</span><span>${spk?i('spk',12):''}</span><span><i class="cell"></i></span><span><i class="cell"></i></span></span><span class="lb"><span class="ar">${i(open?'down':'right',9)}</span><i class="c" style="background:${col}"></i><b>${n}</b></span><span class="nm"><span class="ty">${i(type,type==='star'?12:14)}</span><b>${name}</b></span>${sw(s)}<span class="pa">${i('spiral',13)}<span class="sel"><select aria-label="父级"><option>无</option></select>${i('down',9)}</span></span></div>`;
define('ae-timeline',`
:host{display:grid;grid-template-rows:25px minmax(0,1fr);border:1px solid #40788a;background:var(--panel);margin:0 2px;min-height:0;position:relative}
.tabs{display:flex;align-items:center;color:#8c8c8c}
.tabs button{height:24px}.t1{margin-left:24px}.t2{gap:11px;margin-left:50px}.t3{gap:9px;margin-left:37px;border-bottom:2px solid #aaa;color:#b8b8b8;font-weight:500}
.body{display:grid;grid-template-columns:495fr 6px 621fr;min-height:0}
.left{display:flex;flex-direction:column;min-width:0;min-height:0}.split{background:#191919}
.tool{display:flex;align-items:center;height:36px;padding:2px 0 0 8px}
.tc{width:84px;color:var(--cyan);font:700 14px/15px "Noto Sans CJK SC",sans-serif}.tc small{display:block;font:10px/11px "Liberation Serif",serif;color:#2d7793}
.se{display:flex;align-items:center;flex:1;background:#141414;height:17px;padding-left:6px}input{min-width:0}input[type=search]{all:unset;flex:1;min-width:0}
.ti{display:flex;gap:10px;padding:0 15px 0 17px}.ti :first-child{margin-right:8px}.ti :last-child{margin-left:9px}
.row{display:flex;align-items:center;font-size:11px;border-bottom:1px solid #1c1c1c;min-width:0;white-space:nowrap}
.hd{height:19px;border-top:1px solid #191919;border-bottom:2px solid #191919;color:#8c8c8c;flex:none}
.av{width:59px;padding-left:2px;display:grid;grid-template-columns:14px 15px 14px 14px}.av>span,.sw>span{display:flex;align-items:center;justify-content:center;height:16px}
.lb{width:54px;display:flex;align-items:center}.ar{width:22px;display:flex;justify-content:flex-end;padding-right:3px}.c{width:16px;height:16px}.lb b{width:16px;text-align:center;font-weight:700}
.nm{flex:1;display:flex;align-items:center;min-width:0;padding-left:17px;gap:6px}.layer .nm b{font-weight:700;color:#909090}.ty{width:14px;display:flex;justify-content:center}
.sw{width:116px;display:grid;grid-template-columns:repeat(8,1fr)}.pa{width:141px;padding-left:16px;display:flex;align-items:center;gap:7px}
.hd .sw ae-icon{color:#999!important}
.cell{width:12px;height:12px;background:#1c1c1c}
.layer{background:#2a2a2a}
.sel{display:flex;align-items:center;width:86px;height:16px;background:#191919;padding-right:4px}select{all:unset;flex:1;padding-left:7px;font-weight:700}
.rows{display:grid;grid-template-rows:repeat(5,1fr);height:97px;flex:none}
.prop .nm{padding-left:10px;gap:4px;color:#777}.prop .sw{display:flex;align-items:center;font-family:var(--serif);color:#3b8ca8;padding-left:1px}.prop .pa{padding-left:29px}
.fill{flex:1}.foot{height:16px;display:flex;align-items:center;border-top:1px solid #191919;color:#8c8c8c;font-size:11px;gap:6px;flex:none}
.mode{background:#1a1a1a;width:128px;height:15px;justify-content:center;margin-left:179px}
.lf{padding-left:4px}
.right{display:flex;flex-direction:column;padding:8px 23px 0 2px;min-width:0;min-height:0;position:relative}
.nav{height:8px;background:#606060}.nav,.work{margin:0 -7px;border:solid #3aa8dc;border-width:0 7px;flex:none}.nav{border-radius:4px}.work{height:14px;background:#555;border-radius:3px}
.ruler{display:flex;justify-content:space-between;height:20px;flex:none;font:10px/15px "Liberation Serif",serif;color:#8c8c8c}
.ruler span{width:0;display:flex;flex-direction:column;align-items:center}.ruler i{width:1px;height:5px;background:#777;flex:none}
.cache{height:5px;flex:none;background:linear-gradient(#1d1d1d 1px,transparent 1px 4px,#1d1d1d 4px),linear-gradient(90deg,transparent 19%,#35a53a 19%),repeating-linear-gradient(90deg,#2f7d33 0 3px,#1d1d1d 3px 6px,#2f7d33 6px 7px,#1d1d1d 7px 11px)}
.tr{flex:1;min-height:0;background:#2e2e2e}
.tracks{display:grid;grid-template-rows:repeat(5,1fr);height:97px}.tracks div{border-bottom:1px solid #242424;padding:1px 0;background:#292929}.tracks .l{background:#333}
.tracks i{display:block;height:16px}
.tracks .k{display:flex;align-items:center;gap:7px;padding-left:83px}
.ph{position:absolute;left:132px;width:2px;top:8px;bottom:16px;background:#4d8ea8;z-index:2}.ph svg{position:absolute;top:13px;left:-5px;width:12px;height:13px}
.over{position:absolute;z-index:2}
.side{position:absolute;right:-1px;top:37px;width:16px;display:flex;flex-direction:column;gap:8px;color:#aaa}
input[type=range]{appearance:none;background:linear-gradient(#484848,#484848) center/100% 2px no-repeat;width:46px;height:12px;margin:0}
input[type=range]::-webkit-slider-thumb{appearance:none;width:10px;height:10px;border:2px solid #999;border-radius:50%;background:#222}
.zoom{margin:0 -1px;gap:10px}
.red{position:absolute;z-index:4;left:109px;top:145px;width:532px;height:38px;border:5px solid #fb0b20}
`,`<div class="tabs"><button class="t1">渲染队列</button><button class="t2"><ae-swatch style="--c:#a4966f"></ae-swatch>画板</button><button class="t3">${i('x',6,'#888')}<ae-swatch style="--c:#a4966f"></ae-swatch>预合成 1${i('menu',8)}</button></div>
<div class="body"><div class="left"><div class="tool"><div class="tc">0:00:04:12<small>00132 (30.00 fps)</small></div><div class="se">${i('search',15)}<input type="search" aria-label="搜索图层"></div><div class="ti">${i('mini',16)}${i('shy',15)}${i('blend',15)}${i('mblur',15)}${i('graph',15)}</div></div>
<div class="row hd"><span class="av"><span>${i('eye',11)}</span><span>${i('spk',12)}</span><span>${i('dot',10)}</span><span>${i('lockc',11)}</span></span><span class="lb"><span style="width:20px"></span>${i('tag',12)}<b style="width:28px;font-weight:400">#</b></span><span class="nm" style="padding-left:19px">图层名称</span>${sw(['shy','sun','back','fx','film','mblur','half','cube'])}<span class="pa" style="padding-left:17px">父级和链接</span></div>
<div class="rows">${layer(1,'#9fc7bd',0,0,'star','椭圆形',['shy','sun','slash','','','#','#','#'])}${layer(2,'#9fc7bd',1,1,'mov','[light.mov]',['shy','','slash','','#','#','#','#'])}
<div class="row prop"><span class="av"></span><span class="lb"></span><span class="nm">${i('watch',13)}缩放</span><span class="sw">${i('chain',13,'#999')}<span style="width:5px"></span>7.7,7.7%</span><span class="pa">${i('spiral',12)}</span></div>
${layer(3,'#e2cf3f',1,0,'star','形状结合',['shy','sun','slash','','','#','#','#'])}
<div class="row prop"><span class="av"><span>${i('tl',10)}</span><span>${i('kf',9)}</span><span>${i('tr',9,'#444')}</span></span><span class="lb"></span><span class="nm">${i('watchon',13,'#3a9cc4')}${i('graph2',13)}<span style="padding-left:3px">不透明度</span></span><span class="sw">0%</span><span class="pa">${i('spiral',12)}</span></div></div>
<div class="fill"></div><div class="foot lf">${i('foot1',12,'#3a8cb0')}${i('foot2',12)}${i('foot3',12)}<button class="mode">切换开关/模式</button></div></div>
<div class="split"></div>
<div class="right"><div class="nav"></div><div class="ruler">${['0:00s','02s','04s','06s','08s','10s','12s','14s','16s','18s','20s'].map(t=>`<span>${t}<i></i></span>`).join('')}</div><div class="work"></div><div class="cache"></div>
<div class="tr"><div class="tracks"><div class="l"><i style="background:#6c7f78"></i></div><div class="l"><i style="background:#6c7f78;width:112px"></i></div><div></div><div class="l"><i style="background:#8a8240"></i></div><div class="k">${i('kin',10)}${i('kout',10)}</div></div></div>
<div class="foot zoom">${i('mts',9)}<input type="range" value="4" aria-label="时间缩放">${i('mtl',14)}</div>
<div class="ph"><svg viewBox="0 0 12 13"><path d="M0 0h12v7l-6 6-6-6z" fill="#3aa8dc"/></svg></div>
<svg class="over" style="left:87px;top:65px" width="12" height="18" viewBox="0 0 12 18"><path d="M1 1v14l3.500-3 2.500 5 2-1-2.500-5H11z" fill="#111" stroke="#ccc" stroke-width="1.300"/></svg>
<svg class="over" style="left:128px;top:96px" width="10" height="13" viewBox="0 0 10 13"><path d="M2 1h6M2 12h6M5 1v11" stroke="#aaa" stroke-width="2"/></svg>
<div class="side">${i('shield',13)}${i('layersr',14)}</div></div></div><div class="red"></div>`);
</script>
</body>
</html>
